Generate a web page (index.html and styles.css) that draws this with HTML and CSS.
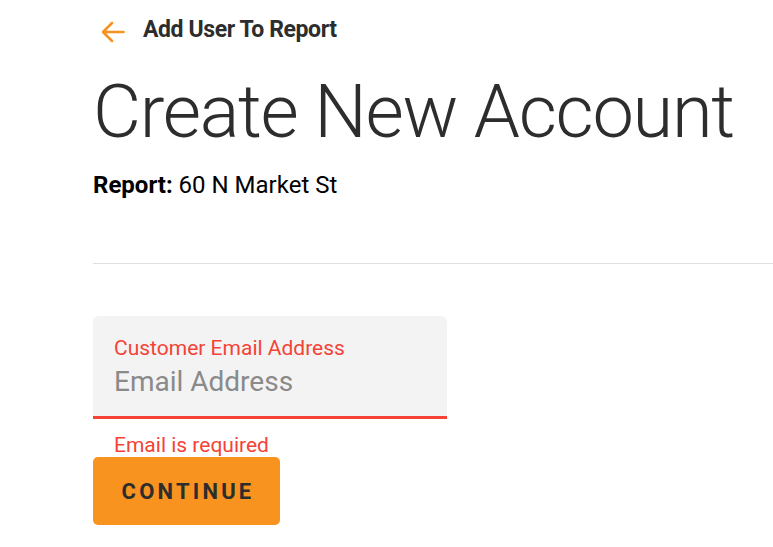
FILE: index.html
```html
<!DOCTYPE html>
<html lang="en">
<head>
    <meta charset="UTF-8">
    <title>Create New Account</title>
    <link rel="stylesheet" href="styles.css">
</head>
<body>
    <div class="page">
        <a class="back" href="#">
            <svg class="back-icon" width="24" height="22" viewBox="0 0 24 22">
                <path d="M22.5 11H2.5M11 2L2 11l9 9" fill="none" stroke="#f7931e" stroke-width="2.6" stroke-linecap="round" stroke-linejoin="round"/>
            </svg>
            <span>Add User To Report</span>
        </a>
        <h1 class="title">Create New Account</h1>
        <p class="report"><strong>Report:</strong> 60 N Market St</p>
        <hr class="divider">
        <form class="form">
            <div class="field">
                <label class="field-label" for="email">Customer Email Address</label>
                <input class="field-input" id="email" type="text" placeholder="Email Address">
            </div>
            <div class="field-error">Email is required</div>
            <button class="btn" type="button">CONTINUE</button>
        </form>
    </div>
</body>
</html>
```

FILE: styles.css
```css
body {
    margin: 0;
    font-family: Roboto, "Liberation Sans", sans-serif;
    color: #2d2d2d;
    background: #fff;
}

.page {
    padding: 15px 0 0 93px;
}

.back {
    display: flex;
    align-items: center;
    gap: 18px;
    text-decoration: none;
    color: #2d2d2d;
    font-size: 23px;
    font-weight: 700;
    line-height: 30px;
    margin-left: 8px;
    letter-spacing: -0.4px;
}

.back-icon {
    margin-top: 3px;
}

.title {
    font-size: 74px;
    font-weight: 300;
    letter-spacing: -1.3px;
    line-height: 80px;
    white-space: nowrap;
    margin: 27px 0 0;
    color: #2d2d2d;
}

.report {
    font-size: 24px;
    line-height: 28px;
    margin: 19px 0 0;
    color: #000;
}

.divider {
    border: none;
    border-top: 1px solid #e0e0e0;
    margin: 64px 0 0;
}

.form {
    padding-top: 52px;
}

.field {
    width: 354px;
    background: #f3f3f3;
    border-radius: 6px 6px 0 0;
    border-bottom: 3px solid #f44336;
    padding: 20px 21px 18px;
    box-sizing: border-box;
}

.field-label {
    display: block;
    color: #f44336;
    font-size: 21px;
    line-height: 24px;
}

.field-input {
    display: block;
    border: none;
    background: transparent;
    font-family: inherit;
    font-size: 28px;
    line-height: 32px;
    height: 32px;
    color: #333;
    padding: 0;
    margin-top: 6px;
    outline: none;
    width: 100%;
}

.field-input::placeholder {
    color: #8a8a8a;
}

.field-error {
    color: #f44336;
    font-size: 21px;
    line-height: 24px;
    padding: 14px 0 0 21px;
}

.btn {
    display: block;
    width: 187px;
    height: 68px;
    background: #f7931e;
    border: none;
    border-radius: 5px;
    font-family: inherit;
    font-size: 22px;
    font-weight: 700;
    letter-spacing: 3.2px;
    color: #2d2d2d;
    padding: 0 0 0 3px;
}
```
